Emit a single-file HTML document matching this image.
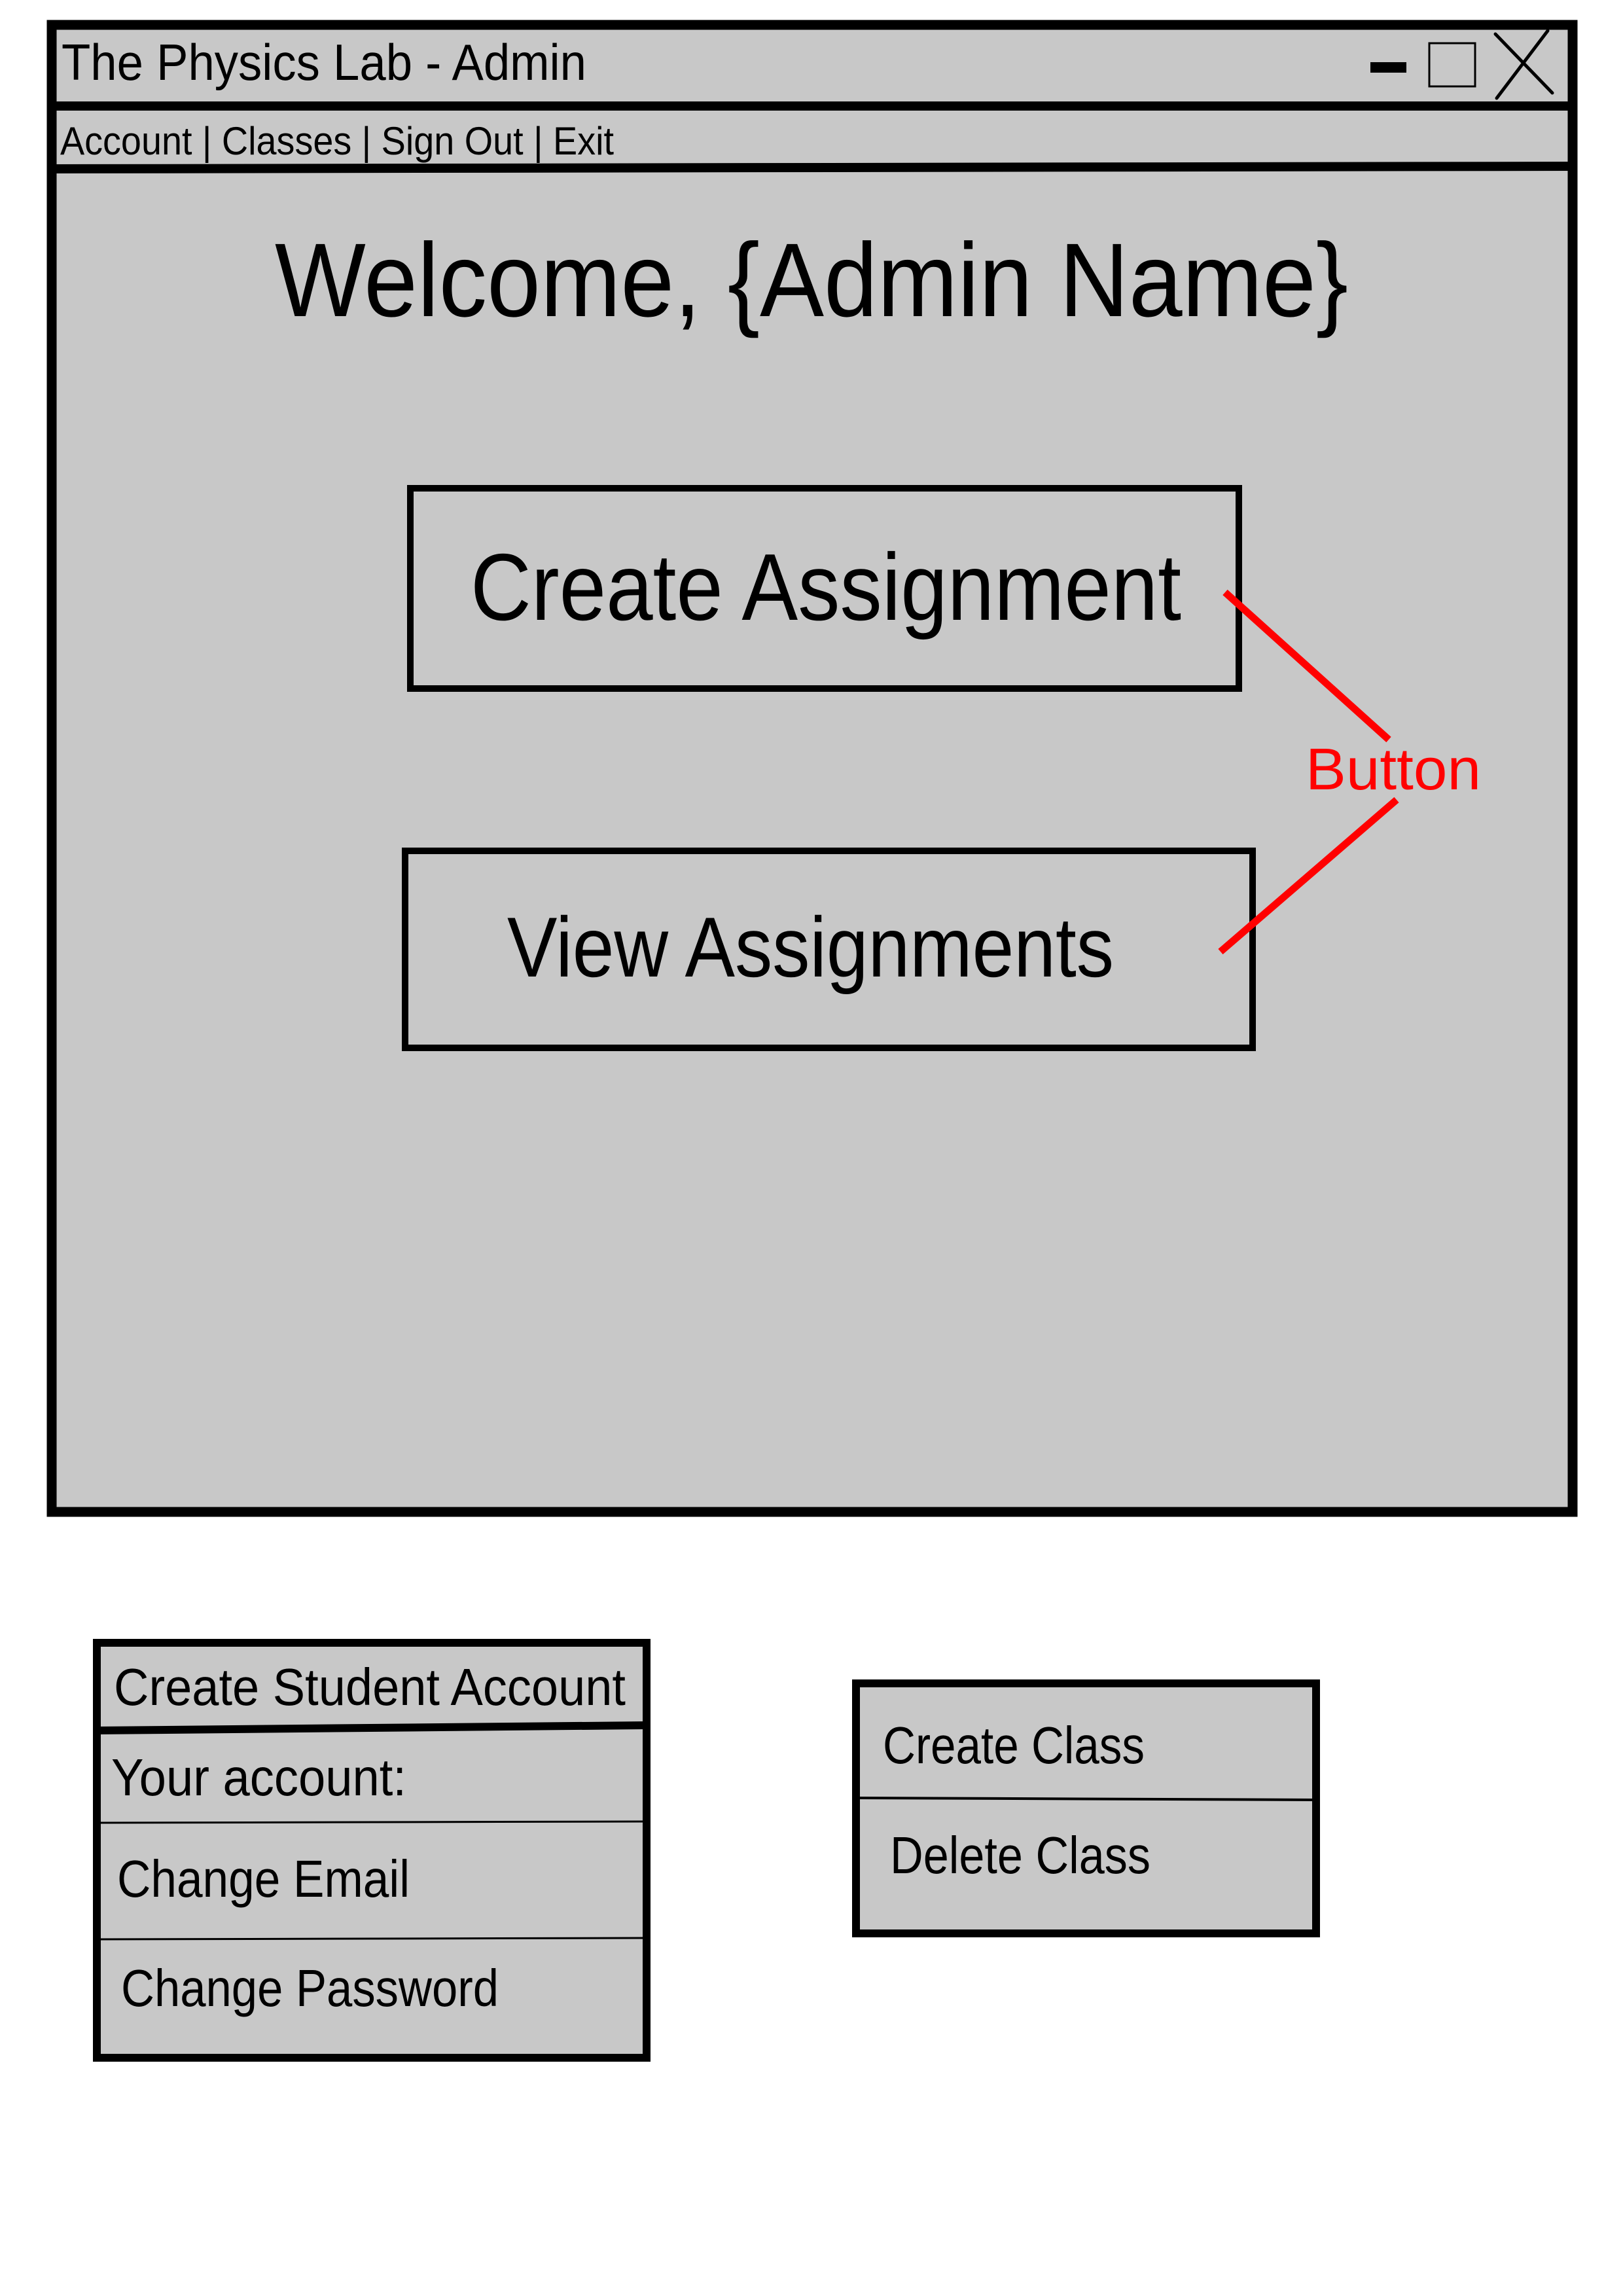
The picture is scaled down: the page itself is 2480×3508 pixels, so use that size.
<!DOCTYPE html>
<html><head><meta charset="utf-8"><style>html,body{margin:0;padding:0;background:#fff}svg{display:block}text{font-family:"Liberation Sans",sans-serif;fill:#000}</style></head>
<body>
<svg width="2480" height="3508" viewBox="0 0 2480 3508" xmlns="http://www.w3.org/2000/svg">
<rect x="0" y="0" width="2480" height="3508" fill="#fff"/>
<rect x="79" y="38" width="2324" height="2272" fill="#c8c8c8" stroke="#000" stroke-width="15"/>
<line x1="79" y1="162" x2="2403" y2="162" stroke="#000" stroke-width="14"/>
<line x1="79" y1="258" x2="2403" y2="254" stroke="#000" stroke-width="14"/>
<text x="94" y="122" font-size="78" textLength="802" lengthAdjust="spacingAndGlyphs">The Physics Lab - Admin</text>
<text x="92" y="236" font-size="60" textLength="846" lengthAdjust="spacingAndGlyphs">Account | Classes | Sign Out | Exit</text>
<rect x="2094" y="95" width="55" height="16" fill="#000"/>
<rect x="2184" y="66" width="70" height="66" fill="none" stroke="#000" stroke-width="3"/>
<line x1="2285" y1="52" x2="2372" y2="142" stroke="#000" stroke-width="5" stroke-linecap="round"/>
<line x1="2365" y1="47" x2="2287" y2="150" stroke="#000" stroke-width="5" stroke-linecap="round"/>
<text x="420" y="483" font-size="160" textLength="1640" lengthAdjust="spacingAndGlyphs">Welcome, {Admin Name}</text>
<rect x="627" y="746" width="1266" height="306" fill="none" stroke="#000" stroke-width="10"/>
<text x="719" y="947" font-size="145" textLength="1086" lengthAdjust="spacingAndGlyphs">Create Assignment</text>
<rect x="619" y="1300" width="1295" height="301" fill="none" stroke="#000" stroke-width="10"/>
<text x="775" y="1492" font-size="130" textLength="927" lengthAdjust="spacingAndGlyphs">View Assignments</text>
<line x1="1872" y1="905" x2="2122" y2="1130" stroke="#ff0000" stroke-width="11"/>
<line x1="1865" y1="1454" x2="2134" y2="1222" stroke="#ff0000" stroke-width="11"/>
<text x="1995" y="1206" font-size="90" textLength="268" lengthAdjust="spacingAndGlyphs" style="fill:#ff0000">Button</text>
<rect x="148" y="2510" width="840" height="634" fill="#c8c8c8" stroke="#000" stroke-width="12"/>
<line x1="145" y1="2644" x2="988" y2="2636" stroke="#000" stroke-width="12"/>
<line x1="148" y1="2785" x2="988" y2="2783" stroke="#000" stroke-width="3"/>
<line x1="148" y1="2963" x2="988" y2="2961" stroke="#000" stroke-width="3"/>
<text x="174" y="2605" font-size="80" textLength="782" lengthAdjust="spacingAndGlyphs">Create Student Account</text>
<text x="170" y="2743" font-size="80" textLength="451" lengthAdjust="spacingAndGlyphs">Your account:</text>
<text x="179" y="2898" font-size="80" textLength="447" lengthAdjust="spacingAndGlyphs">Change Email</text>
<text x="185" y="3065" font-size="80" textLength="577" lengthAdjust="spacingAndGlyphs">Change Password</text>
<rect x="1308" y="2572" width="703" height="382" fill="#c8c8c8" stroke="#000" stroke-width="12"/>
<line x1="1305" y1="2747" x2="2011" y2="2750" stroke="#000" stroke-width="4"/>
<text x="1349" y="2694" font-size="80" textLength="400" lengthAdjust="spacingAndGlyphs">Create Class</text>
<text x="1360" y="2862" font-size="80" textLength="398" lengthAdjust="spacingAndGlyphs">Delete Class</text>
</svg>
</body></html>
